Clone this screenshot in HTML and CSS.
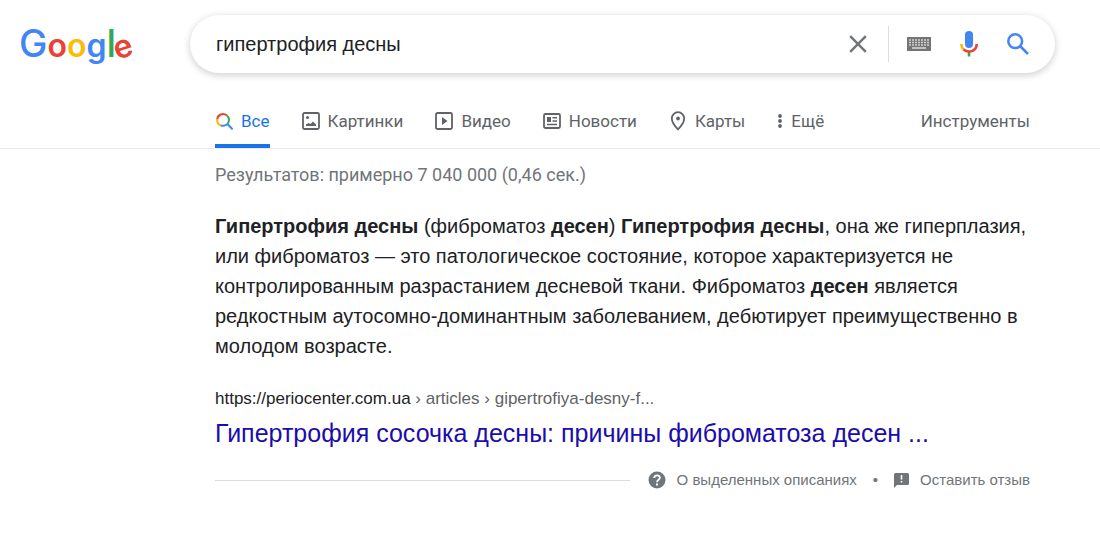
FILE: index.html
```html
<!DOCTYPE html>
<html lang="ru">
<head>
<meta charset="utf-8">
<meta name="viewport" content="width=device-width, initial-scale=1">
<title>гипертрофия десны - Поиск в Google</title>
<link rel="stylesheet" href="styles.css">
</head>
<body>
<header class="header">
  <a class="logo" href="#" aria-label="Google">
    <svg width="130" height="58" viewBox="0 0 130 58"><text class="logo-text" x="-1" y="42"><tspan class="blue tall">G</tspan><tspan class="red">o</tspan><tspan class="yellow">o</tspan><tspan class="blue">g</tspan><tspan class="green tall">l</tspan><tspan class="red" dx="1" dy="3" rotate="-18">e</tspan></text></svg>
  </a>
  <form class="search">
    <input class="query" type="text" value="гипертрофия десны" aria-label="Найти">
    <button class="tool clear" type="button" aria-label="Очистить"><svg width="18" height="18" viewBox="0 0 18 18"><path d="M1.200 1.200 16.800 16.800M16.800 1.200 1.200 16.800" fill="none" stroke="#70757a" stroke-width="2.500"/></svg></button>
    <button class="tool keyboard" type="button" aria-label="Экранная клавиатура"><svg width="24" height="14" viewBox="0 0 24 14"><path fill="#757575" d="M0 0h24v14H0z"/><path d="M2 3h20M2 5.500h20M2 8h20" stroke="#d0d0d0" stroke-width="1.500" stroke-dasharray="2 1"/><path d="M5 11h14" stroke="#ddd" stroke-width="1.500"/></svg></button>
    <button class="tool mic" type="button" aria-label="Голосовой поиск"><svg width="18" height="26" viewBox="0 0 18 26"><rect x="5" width="8" height="17" rx="4" fill="#4285f4"/><path fill="#34a853" d="M7.700 20h2.600v5.500H7.700z"/><path d="M1.300 13c0 2.600 1 4.300 2.500 5.600" fill="none" stroke="#fbbc05" stroke-width="2.600"/><path d="M3.600 18.400C7.500 22.200 16.700 21 16.700 13" fill="none" stroke="#ea4335" stroke-width="2.600"/></svg></button>
    <button class="tool submit" type="submit" aria-label="Поиск"><svg width="22" height="22" viewBox="0 0 22 22"><g fill="none" stroke="#4285f4" stroke-width="2.500"><circle cx="8.200" cy="8.200" r="6.900"/><path d="m13 13 8 8"/></g></svg></button>
  </form>
</header>
<nav class="tabs">
  <a class="tab active" href="#"><svg width="18" height="18" viewBox="-1 -1 18 18"><g fill="none" stroke-width="2"><path stroke="#ea4335" d="M1.200 6.500a5.900 5.900 0 0 1 9.600-4.200"/><path stroke="#34a853" d="M10.600 2.200a5.900 5.900 0 0 1 .8 8.800"/><path stroke="#fbbc04" d="M1.200 6.400a5.900 5.900 0 0 0 4 6.200"/><path stroke="#4285f4" d="M5 12.500c2.500.8 4.500.2 6.400-1.500l5.200 5.400"/></g></svg>Все</a>
  <a class="tab" href="#"><svg width="18" height="18" viewBox="0 0 18 18"><rect x="1" y="1" width="16" height="16" rx="1.500" fill="none" stroke="#5f6368" stroke-width="1.800"/><circle cx="5.500" cy="5.500" r="1.500" fill="#5f6368"/><path fill="#5f6368" d="M4 14v-1.500l2.500-1.500 2 1 2.500-2.500 3 3V14z"/></svg>Картинки</a>
  <a class="tab" href="#"><svg width="18" height="18" viewBox="0 0 18 18"><rect x="1" y="1" width="16" height="16" rx="1.500" fill="none" stroke="#5f6368" stroke-width="1.800"/><path fill="#5f6368" d="m7 5 5.500 4L7 13z"/></svg>Видео</a>
  <a class="tab" href="#"><svg width="18" height="18" viewBox="0 0 18 18"><rect x="1" y="2" width="16" height="14" rx="1.500" fill="none" stroke="#5f6368" stroke-width="1.800"/><path fill="#5f6368" d="M4 5h4v5H4z"/><path d="M9.500 5.700H14M9.500 9H14M4 12.500h10" stroke="#5f6368" stroke-width="1.500"/></svg>Новости</a>
  <a class="tab" href="#"><svg width="18" height="20" viewBox="0 0 18 20"><path d="M9 1.200a6.200 6.200 0 0 0-6.200 6.200C2.800 12 9 18.300 9 18.300S15.200 12 15.200 7.400A6.200 6.200 0 0 0 9 1.200z" fill="none" stroke="#5f6368" stroke-width="1.800"/><circle cx="9" cy="7.500" r="1.900" fill="#5f6368"/></svg>Карты</a>
  <button class="tab more" type="button"><svg width="6" height="16" viewBox="0 0 6 16"><g fill="#5f6368"><circle cx="3" cy="3" r="1.900"/><circle cx="3" cy="8" r="1.900"/><circle cx="3" cy="13" r="1.900"/></g></svg>Ещё</button>
  <button class="tab instruments" type="button">Инструменты</button>
</nav>
<main class="results">
  <p class="stats">Результатов: примерно 7 040 000 (0,46 сек.)</p>
  <p class="snippet"><b>Гипертрофия десны</b> (фиброматоз <b>десен</b>) <b>Гипертрофия десны</b>, она же гиперплазия, или фиброматоз — это патологическое состояние, которое характеризуется не контролированным разрастанием десневой ткани. Фиброматоз <b>десен</b> является редкостным аутосомно-доминантным заболеванием, дебютирует преимущественно в молодом возрасте.</p>
  <a class="result" href="#">
    <cite class="url">https://periocenter.com.ua<span class="crumbs"> › articles › gipertrofiya-desny-f...</span></cite>
    <h3 class="title">Гипертрофия сосочка десны: причины фиброматоза десен ...</h3>
  </a>
  <div class="feedback">
    <span class="rule"></span>
    <a class="note" href="#"><svg width="18" height="18" viewBox="0 0 18 18"><circle cx="9" cy="9" r="8.500" fill="#70757a"/><path d="M6.200 7c0-3.700 5.700-3.500 5.700-.2C11.900 8.700 9 8.900 9 11.200" fill="none" stroke="#fff" stroke-width="1.800"/><path fill="#fff" d="M8 12.600h2v2H8z"/></svg>О выделенных описаниях</a>
    <span class="dot">•</span>
    <a class="note" href="#"><svg width="15" height="15" viewBox="0 0 15 15"><path fill="#70757a" d="M1.500 0h12A1.500 1.500 0 0 1 15 1.500v9a1.500 1.500 0 0 1-1.500 1.500H3l-3 3V1.500A1.500 1.500 0 0 1 1.500 0z"/><path fill="#fff" d="M6.700 2h1.600v4.500H6.700zM6.700 8h1.600v1.600H6.700z"/></svg>Оставить отзыв</a>
  </div>
</main>
</body>
</html>
```
FILE: styles.css
```css
* { box-sizing: border-box; }
body { margin: 0; background: #fff; color: #202124; font-family: "Liberation Sans", Arial, sans-serif; }
a { text-decoration: none; color: inherit; }
button { border: 0; padding: 0; background: none; font: inherit; color: inherit; cursor: pointer; }
svg { display: block; flex: none; }

.header { display: flex; align-items: center; padding: 15px 45px 0 20px; }
.logo { width: 170px; flex: none; }
.logo-text { font: 600 32px Inter, sans-serif; }
.tall { font-size: 38px; font-weight: 500; }
.blue { fill: #4285f4; }
.red { fill: #ea4335; }
.yellow { fill: #fbbc05; }
.green { fill: #34a853; }
.search { display: flex; flex: 1; align-items: center; max-width: 865px; height: 58px; padding: 0 12px 0 26px; border-radius: 29px; box-shadow: 0 2px 6px 1px rgba(32, 33, 36, 0.18); }
.query { flex: 1; min-width: 0; border: 0; padding: 0; outline: 0; background: none; font: 20px "Liberation Sans", Arial, sans-serif; color: #202124; }
.tool { display: flex; align-items: center; justify-content: center; width: 50px; height: 36px; }
.clear { width: 62px; margin-right: 4px; border-right: 1px solid #dadce0; }
.keyboard { width: 52px; }
.mic { width: 48px; }

.tabs { display: flex; gap: 32px; height: 76px; padding: 21px 70px 0 215px; border-bottom: 1px solid #ebebeb; font: 17px Roboto, sans-serif; color: #5f6368; }
.tab { display: flex; align-items: center; gap: 8px; white-space: nowrap; }
.active { color: #1a73e8; box-shadow: inset 0 -4px #1a73e8; }
.instruments { margin-left: auto; }

.results { max-width: 1030px; padding-left: 215px; }
.stats { margin: 16px 0 26px; font: 18px/20px Roboto, sans-serif; color: #70757a; }
.snippet { margin: 0; font-size: 20px; line-height: 30px; }
.result { display: block; margin-top: 26px; }
.url { display: block; font-size: 17px; font-style: normal; line-height: 24px; }
.crumbs { color: #5f6368; }
.title { margin: 5px 0 0; font-size: 25px; font-weight: 400; line-height: 34px; color: #1a0dab; white-space: nowrap; }
.feedback { display: flex; align-items: center; margin-top: 20px; font-size: 15px; line-height: 20px; color: #70757a; }
.rule { flex: 1; height: 1px; margin-right: 18px; background: #dadce0; }
.note { display: flex; align-items: center; gap: 11px; }
.dot { margin: 0 16px; }
```
